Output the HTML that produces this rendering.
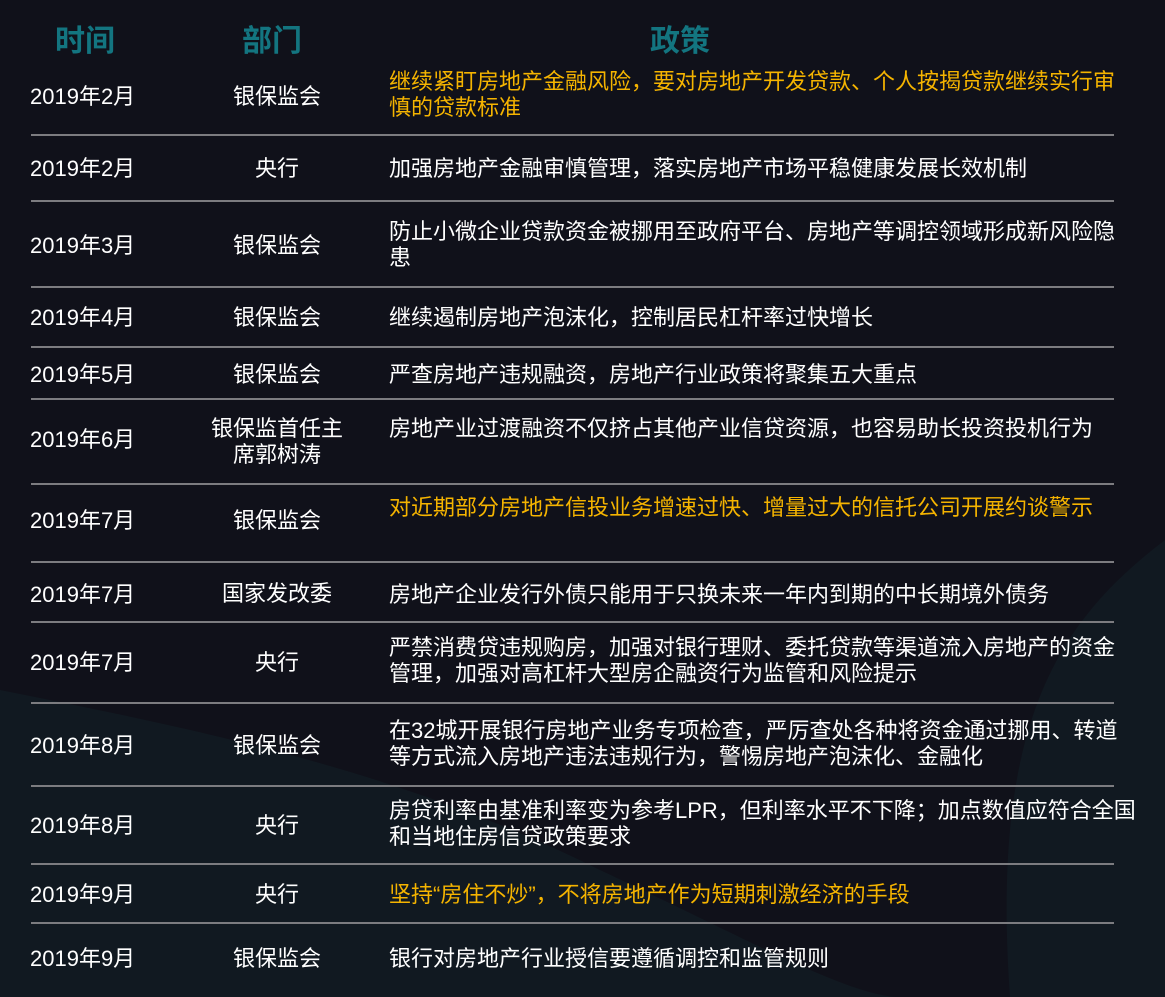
<!DOCTYPE html>
<html><head><meta charset="utf-8"><style>
html,body{margin:0;padding:0}
body{width:1165px;height:997px;position:relative;overflow:hidden;background:#10111a;font-family:"Liberation Sans","Noto Sans CJK SC",sans-serif;color:#fff}
.bg{position:absolute;left:0;top:0;width:1165px;height:997px}
.h{position:absolute;top:22px;font-size:30px;font-weight:bold;color:#137580;line-height:40px;transform:translateX(-50%)}
.t{position:absolute;font-size:22px;line-height:26px;white-space:nowrap}
.d{left:30px}
.c{transform:translateX(-50%);text-align:center}
.p{left:389px}
.o{color:#f5b400}
.l{position:absolute;left:31px;width:1083px;height:2px;background:#7c7c80}
</style></head><body>
<svg class="bg" viewBox="0 0 1165 997">
<path d="M0 690 C200 730 400 770 600 870 C750 940 850 997 900 997 L0 997Z" fill="#13242b" opacity="0.45"/>
<path d="M1165 540 C1060 620 990 720 1010 997 L1165 997Z" fill="#14262d" opacity="0.4"/>
</svg>
<div class="h" style="left:85px">时间</div>
<div class="h" style="left:272px">部门</div>
<div class="h" style="left:680px">政策</div>

<div class="t d" style="top:84px">2019年2月</div><div class="t c" style="left:277px;top:84px">银保监会</div>
<div class="t p o" style="top:69px">继续紧盯房地产金融风险，要对房地产开发贷款、个人按揭贷款继续实行审<br>慎的贷款标准</div>
<div class="l" style="top:134px"></div>

<div class="t d" style="top:156px">2019年2月</div><div class="t c" style="left:277px;top:156px">央行</div>
<div class="t p" style="top:156px">加强房地产金融审慎管理，落实房地产市场平稳健康发展长效机制</div>
<div class="l" style="top:200px"></div>

<div class="t d" style="top:233px">2019年3月</div><div class="t c" style="left:277px;top:233px">银保监会</div>
<div class="t p" style="top:219px">防止小微企业贷款资金被挪用至政府平台、房地产等调控领域形成新风险隐<br>患</div>
<div class="l" style="top:286px"></div>

<div class="t d" style="top:305px">2019年4月</div><div class="t c" style="left:277px;top:305px">银保监会</div>
<div class="t p" style="top:305px">继续遏制房地产泡沫化，控制居民杠杆率过快增长</div>
<div class="l" style="top:346px"></div>

<div class="t d" style="top:362px">2019年5月</div><div class="t c" style="left:277px;top:362px">银保监会</div>
<div class="t p" style="top:362px">严查房地产违规融资，房地产行业政策将聚集五大重点</div>
<div class="l" style="top:398px"></div>

<div class="t d" style="top:427px">2019年6月</div><div class="t c" style="left:277px;top:416px">银保监首任主<br>席郭树涛</div>
<div class="t p" style="top:416px">房地产业过渡融资不仅挤占其他产业信贷资源，也容易助长投资投机行为</div>
<div class="l" style="top:483px"></div>

<div class="t d" style="top:508px">2019年7月</div><div class="t c" style="left:277px;top:508px">银保监会</div>
<div class="t p o" style="top:495px">对近期部分房地产信投业务增速过快、增量过大的信托公司开展约谈警示</div>
<div class="l" style="top:561px"></div>

<div class="t d" style="top:582px">2019年7月</div><div class="t c" style="left:277px;top:581px">国家发改委</div>
<div class="t p" style="top:582px">房地产企业发行外债只能用于只换未来一年内到期的中长期境外债务</div>
<div class="l" style="top:621px"></div>

<div class="t d" style="top:650px">2019年7月</div><div class="t c" style="left:277px;top:650px">央行</div>
<div class="t p" style="top:635px">严禁消费贷违规购房，加强对银行理财、委托贷款等渠道流入房地产的资金<br>管理，加强对高杠杆大型房企融资行为监管和风险提示</div>
<div class="l" style="top:702px"></div>

<div class="t d" style="top:733px">2019年8月</div><div class="t c" style="left:277px;top:733px">银保监会</div>
<div class="t p" style="top:718px">在32城开展银行房地产业务专项检查，严厉查处各种将资金通过挪用、转道<br>等方式流入房地产违法违规行为，警惕房地产泡沫化、金融化</div>
<div class="l" style="top:785px"></div>

<div class="t d" style="top:813px">2019年8月</div><div class="t c" style="left:277px;top:813px">央行</div>
<div class="t p" style="top:798px">房贷利率由基准利率变为参考LPR，但利率水平不下降；加点数值应符合全国<br>和当地住房信贷政策要求</div>
<div class="l" style="top:863px"></div>

<div class="t d" style="top:882px">2019年9月</div><div class="t c" style="left:277px;top:882px">央行</div>
<div class="t p o" style="top:882px">坚持“房住不炒”，不将房地产作为短期刺激经济的手段</div>
<div class="l" style="top:922px"></div>

<div class="t d" style="top:946px">2019年9月</div><div class="t c" style="left:277px;top:946px">银保监会</div>
<div class="t p" style="top:946px">银行对房地产行业授信要遵循调控和监管规则</div>
</body></html>
